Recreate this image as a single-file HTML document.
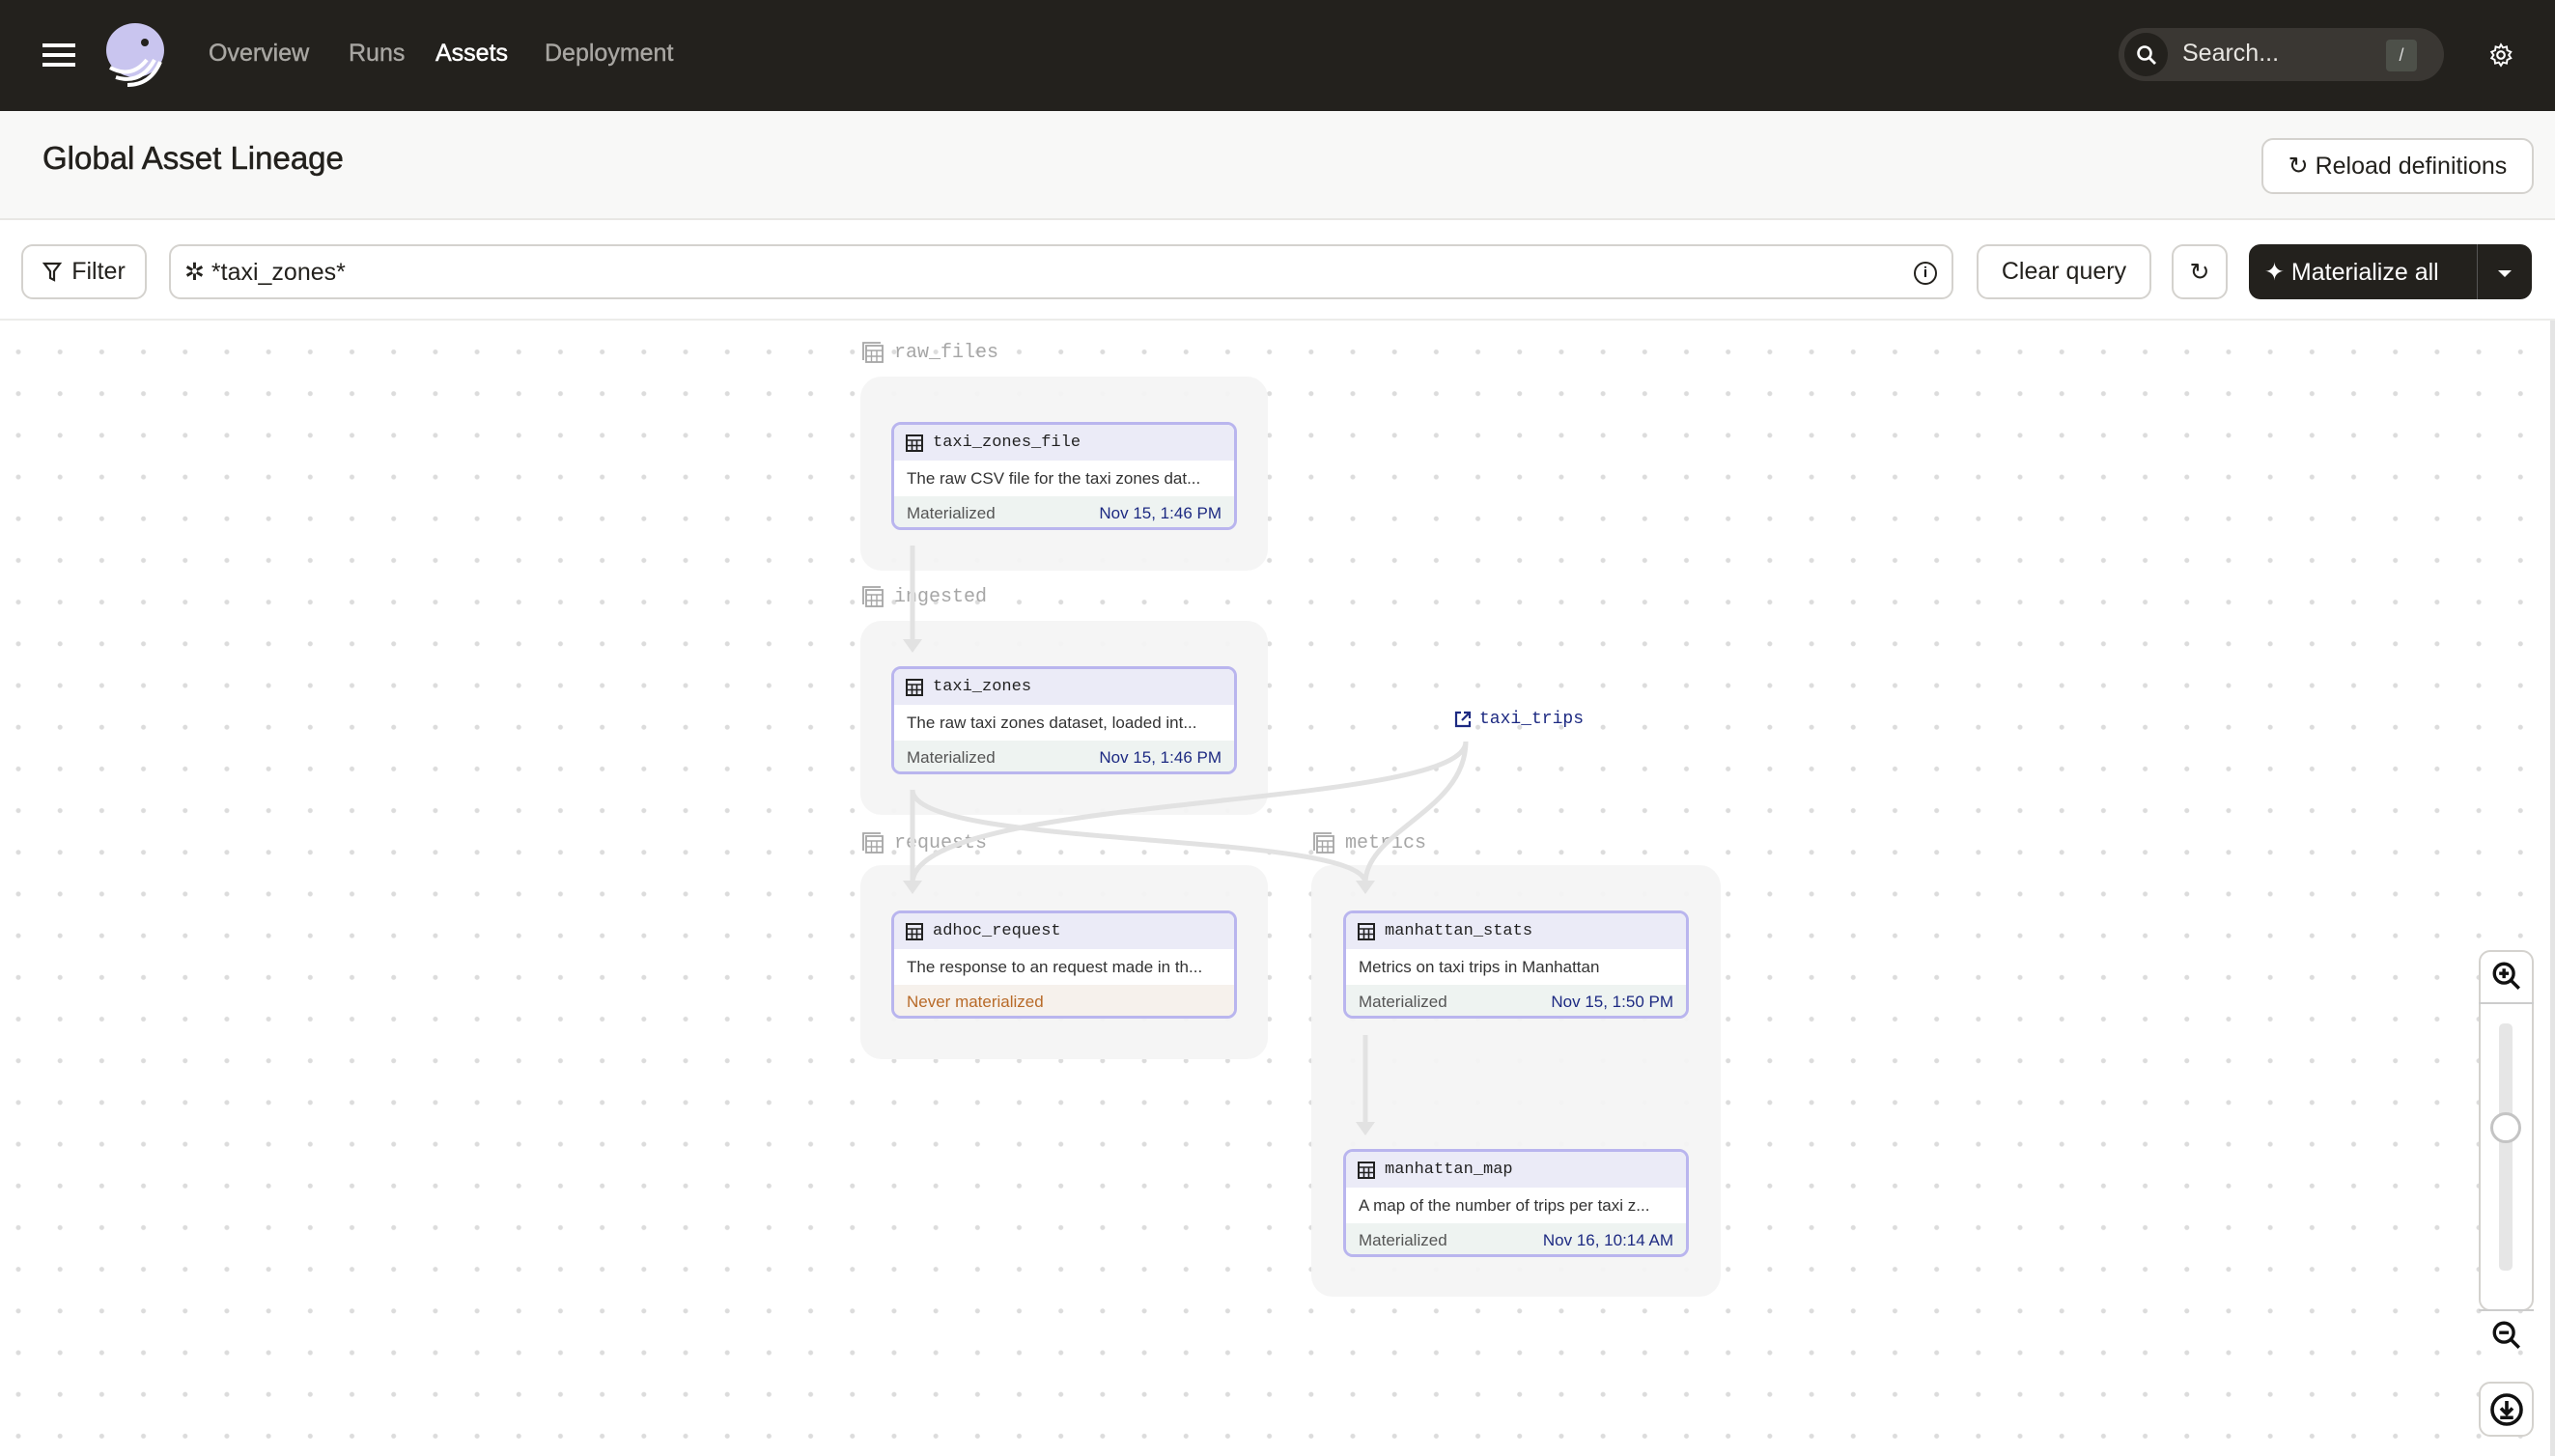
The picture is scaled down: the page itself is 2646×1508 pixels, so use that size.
<!DOCTYPE html>
<html><head><meta charset="utf-8"><style>
*{box-sizing:border-box;margin:0;padding:0}
body{width:2646px;height:1508px;overflow:hidden;font-family:"Liberation Sans",sans-serif;background:#fff;position:relative;
background-image:radial-gradient(circle,#dcdcdc 2.2px,transparent 2.8px);background-size:43.2px 43.2px;background-position:-2.6px -2.6px}
.top{position:absolute;left:0;top:0;width:2646px;height:115px;background:#23211d}
.nav{position:absolute;top:41px;font-size:25px;color:#a8a6a2;-webkit-text-stroke:0.4px #a8a6a2}
.ph{position:absolute;left:0;top:115px;width:2646px;height:113px;background:#f8f8f7;border-bottom:2px solid #e8e7e4}
.tb{position:absolute;left:0;top:228px;width:2646px;height:104px;background:#fff;border-bottom:2px solid #ececea}
.btn{position:absolute;border:2px solid #d4d2ce;border-radius:12px;background:#fff;font-size:25px;color:#23211d;display:flex;align-items:center;justify-content:center;gap:10px}
.grp{position:absolute;background:#f4f4f4;border-radius:22px;opacity:.92}
.gl{position:absolute;font-family:"Liberation Mono",monospace;font-size:20px;color:#a6a6a6;display:flex;align-items:center;gap:10px}
.node{position:absolute;width:358px;height:112px;border:3px solid #b9b5ee;border-radius:10px;overflow:hidden;background:#fff;font-size:17px}
.node .h{height:37px;background:#ebebf7;display:flex;align-items:center;padding-left:12px;gap:10px;font-family:"Liberation Mono",monospace;font-size:17px;color:#222}
.node .d{height:37px;display:flex;align-items:center;padding-left:13px;color:#333;white-space:nowrap}
.node .f{height:36px;background:#eef3f1;display:flex;align-items:center;justify-content:space-between;padding:0 13px;color:#555}
.node .f b{font-weight:normal;color:#1d2a82}
</style></head><body>
<svg width="0" height="0" style="position:absolute"><defs>
<symbol id="tbl" viewBox="0 0 18 18"><rect x="1" y="1" width="16" height="16" fill="none" stroke="currentColor" stroke-width="2"/><path d="M1 6h16M1 11.5h16M6.5 6v11M11.5 6v11" stroke="currentColor" stroke-width="1.6"/></symbol>
<symbol id="grp" viewBox="0 0 24 24"><path d="M2 20V2h18" fill="none" stroke="currentColor" stroke-width="1.8"/><rect x="5" y="5" width="17" height="17" fill="none" stroke="currentColor" stroke-width="1.8"/><path d="M5 10h17M5 16h17M10.5 10v12M16 10v12" stroke="currentColor" stroke-width="1.4"/></symbol>
</defs></svg>
<div class="top">
 <div style="position:absolute;left:44px;top:45px;width:34px;height:4px;background:#fff;box-shadow:0 10px 0 #fff,0 20px 0 #fff"></div>
 <svg style="position:absolute;left:106px;top:22px" width="68" height="70" viewBox="0 0 68 70"><ellipse cx="34" cy="30" rx="30" ry="28" fill="#c9c5ef"/><circle cx="44" cy="22" r="4" fill="#23211d"/><path d="M8 48 Q30 60 46 40 M14 58 Q40 66 54 40 M26 66 Q50 66 60 42" stroke="#fff" stroke-width="4" fill="none"/></svg>
 <div class="nav" style="left:216px">Overview</div>
 <div class="nav" style="left:361px">Runs</div>
 <div class="nav" style="left:451px;color:#fff;-webkit-text-stroke:0.5px #fff">Assets</div>
 <div class="nav" style="left:564px">Deployment</div>
 <div style="position:absolute;left:2194px;top:29px;width:337px;height:55px;border-radius:28px;background:#3a3733"></div>
 <div style="position:absolute;left:2200px;top:34px;width:45px;height:45px;border-radius:50%;background:#23211d"></div>
 <svg style="position:absolute;left:2211px;top:45px" width="24" height="24" viewBox="0 0 24 24"><circle cx="10" cy="10" r="6.5" stroke="#fff" stroke-width="2.6" fill="none"/><path d="M15 15l6 6" stroke="#fff" stroke-width="2.8"/></svg>
 <div style="position:absolute;left:2260px;top:41px;font-size:25px;color:#e8e6e2">Search...</div>
 <div style="position:absolute;left:2471px;top:41px;width:32px;height:33px;border-radius:4px;background:#4d5049;color:#ddd;font-size:18px;text-align:center;line-height:33px">/</div>
 <svg style="position:absolute;left:2577px;top:44px" width="26" height="26" viewBox="0 0 24 24"><circle cx="12" cy="12" r="3.5" stroke="#fff" stroke-width="2" fill="none"/><path d="M12 2l2 3 3.5-1 .5 3.5 3.5 1.5-2 3 2 3-3.5 1.5-.5 3.5-3.5-1-2 3-2-3-3.5 1-.5-3.5L3 15l2-3-2-3 3.5-1.5L7 4l3.5 1z" stroke="#fff" stroke-width="1.8" fill="none"/></svg>
</div>
<div class="ph">
 <div style="position:absolute;left:44px;top:30px;font-size:33px;color:#23211d;-webkit-text-stroke:0.5px #23211d">Global Asset Lineage</div>
 <div class="btn" style="left:2342px;top:28px;width:282px;height:58px">&#x21bb; Reload definitions</div>
</div>
<div class="tb">
 <div class="btn" style="left:22px;top:25px;width:130px;height:57px"><svg width="20" height="22" viewBox="0 0 20 22"><path d="M2 2h16l-6 8v9l-4-2v-7z" fill="none" stroke="#23211d" stroke-width="2.2"/></svg>Filter</div>
 <div class="btn" style="left:175px;top:25px;width:1848px;height:57px;justify-content:flex-start;padding-left:14px">✲ *taxi_zones*</div>
 <div style="position:absolute;left:1982px;top:43px;width:24px;height:24px;border:2.5px solid #23211d;border-radius:50%;font-size:15px;font-weight:bold;text-align:center;line-height:20px">i</div>
 <div class="btn" style="left:2047px;top:25px;width:181px;height:57px">Clear query</div>
 <div class="btn" style="left:2249px;top:25px;width:58px;height:57px">&#x21bb;</div>
 <div style="position:absolute;left:2329px;top:25px;width:293px;height:57px;border-radius:12px;background:#23211d;color:#fff;font-size:25px;display:flex;align-items:center;padding-left:16px;gap:10px">✦ Materialize all</div>
 <div style="position:absolute;left:2565px;top:25px;width:1px;height:57px;background:#555"></div>
 <div style="position:absolute;left:2587px;top:52px;border-left:7px solid transparent;border-right:7px solid transparent;border-top:7px solid #fff"></div>
</div>

<div class="grp" style="left:891px;top:390px;width:422px;height:201px"></div>
<div class="grp" style="left:891px;top:643px;width:422px;height:201px"></div>
<div class="grp" style="left:891px;top:896px;width:422px;height:201px"></div>
<div class="grp" style="left:1358px;top:896px;width:424px;height:447px"></div>
<div class="gl" style="left:892px;top:353px"><svg width="24" height="24"><use href="#grp"/></svg>raw_files</div>
<div class="gl" style="left:892px;top:606px"><svg width="24" height="24"><use href="#grp"/></svg>ingested</div>
<div class="gl" style="left:892px;top:861px"><svg width="24" height="24"><use href="#grp"/></svg>requests</div>
<div class="gl" style="left:1359px;top:861px"><svg width="24" height="24"><use href="#grp"/></svg>metrics</div>

<svg style="position:absolute;left:0;top:0" width="2646" height="1508"><g stroke="#e2e2e2" stroke-width="5" fill="none">
<path d="M945 565V665"/><path d="M945 818V915"/><path d="M945 818C945 880 1414 860 1414 915"/>
<path d="M1518 768C1518 840 945 820 945 915"/><path d="M1518 768C1518 840 1414 860 1414 915"/><path d="M1414 1072V1165"/></g>
<g fill="#e2e2e2"><path d="M935 662h20l-10 14z"/><path d="M935 912h20l-10 14z"/><path d="M1404 912h20l-10 14z"/><path d="M1404 1162h20l-10 14z"/></g></svg>

<div class="node" style="left:923px;top:437px"><div class="h"><svg width="18" height="18"><use href="#tbl"/></svg>taxi_zones_file</div><div class="d">The raw CSV file for the taxi zones dat...</div><div class="f">Materialized<b>Nov 15, 1:46 PM</b></div></div>
<div class="node" style="left:923px;top:690px"><div class="h"><svg width="18" height="18"><use href="#tbl"/></svg>taxi_zones</div><div class="d">The raw taxi zones dataset, loaded int...</div><div class="f">Materialized<b>Nov 15, 1:46 PM</b></div></div>
<div class="node" style="left:923px;top:943px"><div class="h"><svg width="18" height="18"><use href="#tbl"/></svg>adhoc_request</div><div class="d">The response to an request made in th...</div><div class="f" style="background:#f6f1ec;color:#b86a28">Never materialized</div></div>
<div class="node" style="left:1391px;top:943px"><div class="h"><svg width="18" height="18"><use href="#tbl"/></svg>manhattan_stats</div><div class="d">Metrics on taxi trips in Manhattan</div><div class="f">Materialized<b>Nov 15, 1:50 PM</b></div></div>
<div class="node" style="left:1391px;top:1190px"><div class="h"><svg width="18" height="18"><use href="#tbl"/></svg>manhattan_map</div><div class="d">A map of the number of trips per taxi z...</div><div class="f">Materialized<b>Nov 16, 10:14 AM</b></div></div>
<div style="position:absolute;left:1506px;top:735px;font-family:'Liberation Mono',monospace;font-size:18px;color:#1d2a82;display:flex;align-items:center;gap:8px"><svg width="18" height="18" viewBox="0 0 18 18"><path d="M7 2H2v14h14v-5M10 2h6v6M16 2L8 10" fill="none" stroke="#1d2a82" stroke-width="2.2"/></svg>taxi_trips</div>

<div style="position:absolute;left:2567px;top:984px;width:57px;height:374px;border:2px solid #d4d2ce;border-radius:12px;background:#fff"></div>
<div style="position:absolute;left:2567px;top:1038px;width:57px;height:2px;background:#ccc"></div>
<div style="position:absolute;left:2567px;top:1356px;width:57px;height:2px;background:#ccc"></div>
<div style="position:absolute;left:2588px;top:1060px;width:14px;height:256px;border-radius:5px;background:#e6e6e6"></div>
<div style="position:absolute;left:2579px;top:1152px;width:32px;height:32px;border-radius:50%;border:3px solid #c4c4c4;background:#fff"></div>
<svg style="position:absolute;left:2579px;top:994px" width="34" height="34" viewBox="0 0 24 24"><circle cx="10" cy="10" r="7" stroke="#111" stroke-width="2.4" fill="none"/><path d="M15 15l6 6M10 6.5v7M6.5 10h7" stroke="#111" stroke-width="2.4"/></svg>
<svg style="position:absolute;left:2579px;top:1366px" width="34" height="34" viewBox="0 0 24 24"><circle cx="10" cy="10" r="7" stroke="#111" stroke-width="2.4" fill="none"/><path d="M15 15l6 6M6.5 10h7" stroke="#111" stroke-width="2.4"/></svg>
<div style="position:absolute;left:2567px;top:1431px;width:57px;height:57px;border:2px solid #d4d2ce;border-radius:12px;background:#fff"></div>
<svg style="position:absolute;left:2578px;top:1442px" width="36" height="36" viewBox="0 0 24 24"><circle cx="12" cy="12" r="10" stroke="#111" stroke-width="2.4" fill="none"/><path d="M12 6v8M8 11l4 4 4-4M7.5 17.5h9" stroke="#111" stroke-width="2.4" fill="none"/></svg>
<div style="position:absolute;left:2641px;top:332px;width:5px;height:1176px;background:#e4e4e4"></div>
</body></html>
